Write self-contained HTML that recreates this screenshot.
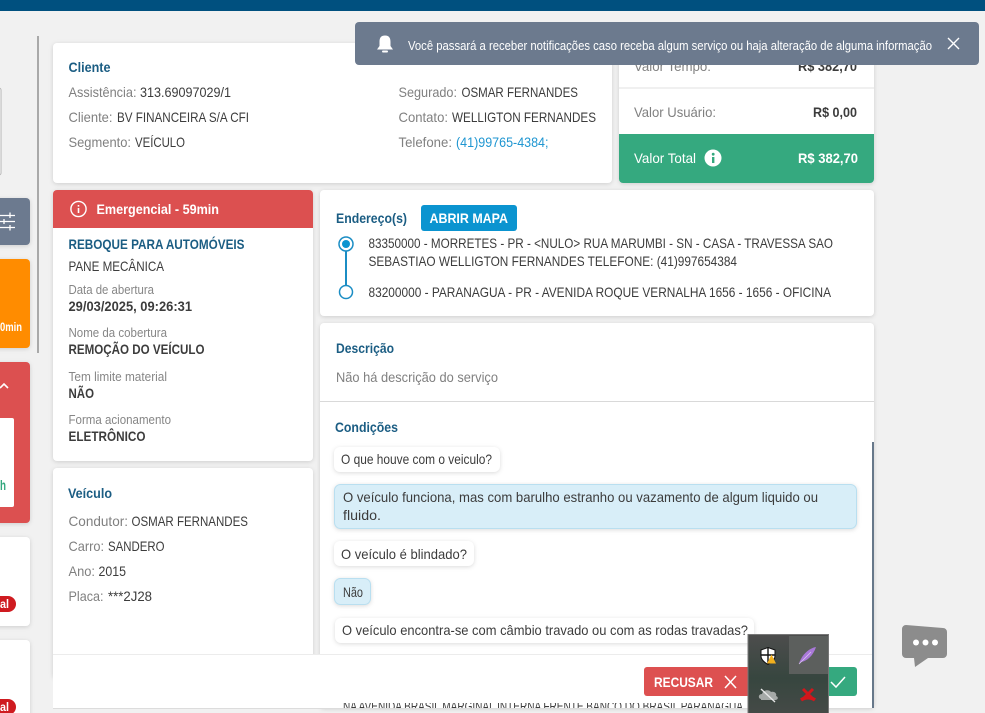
<!DOCTYPE html>
<html lang="pt-BR"><head><meta charset="utf-8"><title>Assistência</title>
<style>
html,body{margin:0;padding:0;width:985px;height:713px;overflow:hidden;background:#f1f1f1}
svg{display:block;position:absolute;left:0;top:0}
text{font-family:"Liberation Sans",sans-serif;font-size:14px;fill:#3c3c3c;white-space:pre}
.l{fill:#808080}.h{fill:#1b5d83;font-weight:bold}.b{font-weight:bold}.w{fill:#fff}.s{font-size:13px;fill:#868686}
.c{filter:drop-shadow(0 1px 2px rgba(0,0,0,.14))}
</style></head><body>
<svg width="985" height="713" viewBox="0 0 985 713" xmlns="http://www.w3.org/2000/svg">
<defs>
<clipPath id="sl"><rect x="330" y="703" width="420" height="5"/></clipPath>
<linearGradient id="tr" x1="0" y1="0" x2="0" y2="1"><stop offset="0" stop-color="#4d4d4d"/><stop offset=".55" stop-color="#37463f"/><stop offset="1" stop-color="#454a47"/></linearGradient>
</defs>
<rect width="985" height="713" fill="#f1f1f1"/>
<rect width="985" height="11" fill="#00507f"/>
<rect x="37" y="36" width="2" height="317" fill="#a9a9a9"/>

<!-- sidebar -->
<rect x="-8" y="88" width="9" height="87" rx="2" fill="#fff" stroke="#b5b5b5"/>
<rect x="-8" y="198" width="38" height="47" rx="4" fill="#6c7a8f" class="c"/>
<g stroke="#fff" stroke-width="1.300" fill="none"><path d="M0 215.500H15M0 221.500H15M0 227.500H15M10 212.500V218M4 219V224M10 225V230.500"/></g>
<rect x="-8" y="259" width="38" height="89" rx="4" fill="#ff8c00" class="c"/>
<text x="0" y="331" class="b w" style="font-size:12px" textLength="22" lengthAdjust="spacingAndGlyphs">0min</text>
<rect x="-8" y="362" width="38" height="161" rx="4" fill="#dc5050" class="c"/>
<path d="M0 388L4 384L8 388" stroke="#fff" stroke-width="1.600" fill="none"/>
<rect x="-8" y="418" width="22" height="89" rx="2" fill="#fff"/>
<text x="0" y="490" class="b" style="fill:#35a97f" textLength="6" lengthAdjust="spacingAndGlyphs">h</text>
<rect x="-8" y="537" width="38" height="89" rx="4" fill="#fff" class="c"/>
<rect x="-10" y="596" width="26" height="16" rx="8" fill="#cf1b20"/>
<text x="0" y="608" class="b w" style="font-size:12px" textLength="9" lengthAdjust="spacingAndGlyphs">al</text>
<rect x="-8" y="640" width="38" height="89" rx="4" fill="#fff" class="c"/>
<rect x="-10" y="699" width="26" height="16" rx="8" fill="#cf1b20"/>
<text x="0" y="711" class="b w" style="font-size:12px" textLength="9" lengthAdjust="spacingAndGlyphs">al</text>

<!-- cliente -->
<rect x="53" y="43" width="559" height="140" rx="4" fill="#fff" class="c"/>
<text x="68.500" y="72" class="h" textLength="42" lengthAdjust="spacingAndGlyphs">Cliente</text>
<text x="68.500" y="97" class="l" textLength="68" lengthAdjust="spacingAndGlyphs">Assistência:</text>
<text x="140" y="97" textLength="91" lengthAdjust="spacingAndGlyphs">313.69097029/1</text>
<text x="68.500" y="122" class="l" textLength="44" lengthAdjust="spacingAndGlyphs">Cliente:</text>
<text x="117" y="122" textLength="132" lengthAdjust="spacingAndGlyphs">BV FINANCEIRA S/A CFI</text>
<text x="68.500" y="147" class="l" textLength="62.500" lengthAdjust="spacingAndGlyphs">Segmento:</text>
<text x="135" y="147" textLength="50" lengthAdjust="spacingAndGlyphs">VEÍCULO</text>
<text x="398.500" y="97" class="l" textLength="58.500" lengthAdjust="spacingAndGlyphs">Segurado:</text>
<text x="461.500" y="97" textLength="116.500" lengthAdjust="spacingAndGlyphs">OSMAR FERNANDES</text>
<text x="398.500" y="122" class="l" textLength="49.500" lengthAdjust="spacingAndGlyphs">Contato:</text>
<text x="452" y="122" textLength="144" lengthAdjust="spacingAndGlyphs">WELLIGTON FERNANDES</text>
<text x="398.500" y="147" class="l" textLength="53.500" lengthAdjust="spacingAndGlyphs">Telefone:</text>
<text x="456" y="147" style="fill:#1f96d1" textLength="92.500" lengthAdjust="spacingAndGlyphs">(41)99765-4384;</text>

<!-- valores -->
<rect x="619" y="30" width="255" height="153" rx="4" fill="#fff" class="c"/>
<rect x="619" y="87" width="255" height="2" fill="#f0f0f0"/>
<text x="634" y="71" class="l" textLength="77" lengthAdjust="spacingAndGlyphs">Valor Tempo:</text>
<text x="798" y="71" class="b" textLength="59" lengthAdjust="spacingAndGlyphs">R$ 382,70</text>
<text x="634" y="117" class="l" textLength="82" lengthAdjust="spacingAndGlyphs">Valor Usuário:</text>
<text x="813" y="117" class="b" textLength="44" lengthAdjust="spacingAndGlyphs">R$ 0,00</text>
<path d="M619 134H874V179a4 4 0 0 1-4 4H623a4 4 0 0 1-4-4Z" fill="#35a97f"/>
<text x="634" y="163" class="w" textLength="62" lengthAdjust="spacingAndGlyphs">Valor Total</text>
<circle cx="713" cy="158" r="8.500" fill="#fff"/>
<rect x="712" y="157" width="2.400" height="6" fill="#35a97f"/><circle cx="713.200" cy="154.200" r="1.400" fill="#35a97f"/>
<text x="798" y="163" class="b w" textLength="60" lengthAdjust="spacingAndGlyphs">R$ 382,70</text>

<!-- emergencial -->
<rect x="53" y="190" width="260" height="271" rx="4" fill="#fff" class="c"/>
<path d="M53 228V194a4 4 0 0 1 4-4H309a4 4 0 0 1 4 4V228Z" fill="#dc5050"/>
<circle cx="78.500" cy="209" r="7.600" fill="none" stroke="#fff" stroke-width="1.400"/>
<rect x="77.700" y="208" width="1.600" height="5" fill="#fff"/><rect x="77.700" y="205" width="1.600" height="1.600" fill="#fff"/>
<text x="96.500" y="214" class="b w" textLength="122.500" lengthAdjust="spacingAndGlyphs">Emergencial - 59min</text>
<text x="68.500" y="249" class="h" textLength="176" lengthAdjust="spacingAndGlyphs">REBOQUE PARA AUTOMÓVEIS</text>
<text x="68.500" y="271" textLength="95.500" lengthAdjust="spacingAndGlyphs">PANE MECÂNICA</text>
<text x="68.500" y="294" class="s" textLength="85.500" lengthAdjust="spacingAndGlyphs">Data de abertura</text>
<text x="68.500" y="311" class="b" textLength="123.500" lengthAdjust="spacingAndGlyphs">29/03/2025, 09:26:31</text>
<text x="68.500" y="337" class="s" textLength="98.500" lengthAdjust="spacingAndGlyphs">Nome da cobertura</text>
<text x="68.500" y="354" class="b" textLength="136" lengthAdjust="spacingAndGlyphs">REMOÇÃO DO VEÍCULO</text>
<text x="68.500" y="381" class="s" textLength="98.500" lengthAdjust="spacingAndGlyphs">Tem limite material</text>
<text x="68.500" y="398" class="b" textLength="25.500" lengthAdjust="spacingAndGlyphs">NÃO</text>
<text x="68.500" y="424" class="s" textLength="102.500" lengthAdjust="spacingAndGlyphs">Forma acionamento</text>
<text x="68.500" y="441" class="b" textLength="77" lengthAdjust="spacingAndGlyphs">ELETRÔNICO</text>

<!-- veiculo -->
<rect x="53" y="468" width="260" height="210" rx="4" fill="#fff" class="c"/>
<text x="68" y="498" class="h" textLength="44" lengthAdjust="spacingAndGlyphs">Veículo</text>
<text x="68.500" y="526" class="l" textLength="59.500" lengthAdjust="spacingAndGlyphs">Condutor:</text>
<text x="131.500" y="526" textLength="116.500" lengthAdjust="spacingAndGlyphs">OSMAR FERNANDES</text>
<text x="68.500" y="551" class="l" textLength="35.500" lengthAdjust="spacingAndGlyphs">Carro:</text>
<text x="108" y="551" textLength="56.500" lengthAdjust="spacingAndGlyphs">SANDERO</text>
<text x="68.500" y="576" class="l" textLength="26.500" lengthAdjust="spacingAndGlyphs">Ano:</text>
<text x="98.500" y="576" textLength="27.500" lengthAdjust="spacingAndGlyphs">2015</text>
<text x="68.500" y="601" class="l" textLength="35" lengthAdjust="spacingAndGlyphs">Placa:</text>
<text x="108" y="601" textLength="44" lengthAdjust="spacingAndGlyphs">***2J28</text>

<!-- endereco -->
<rect x="320" y="190" width="554" height="126" rx="4" fill="#fff" class="c"/>
<text x="336" y="223" class="h" textLength="71" lengthAdjust="spacingAndGlyphs">Endereço(s)</text>
<rect x="421" y="205" width="96" height="26" rx="3" fill="#0b94d0"/>
<text x="429.500" y="223" class="b w" textLength="78.500" lengthAdjust="spacingAndGlyphs">ABRIR MAPA</text>
<rect x="345" y="250" width="2" height="36" fill="#1b8dc4"/>
<circle cx="346" cy="244" r="7" fill="#fff" stroke="#1b8dc4" stroke-width="1.500"/><circle cx="346" cy="244" r="4" fill="#0b94d0"/>
<circle cx="346" cy="292" r="6.500" fill="#fff" stroke="#1b8dc4" stroke-width="1.500"/>
<text x="368.500" y="248" textLength="464.500" lengthAdjust="spacingAndGlyphs">83350000 - MORRETES - PR - &lt;NULO&gt; RUA MARUMBI - SN - CASA - TRAVESSA SAO</text>
<text x="368.500" y="266" textLength="368.500" lengthAdjust="spacingAndGlyphs">SEBASTIAO WELLIGTON FERNANDES TELEFONE: (41)997654384</text>
<text x="368.500" y="297" textLength="462.500" lengthAdjust="spacingAndGlyphs">83200000 - PARANAGUA - PR - AVENIDA ROQUE VERNALHA 1656 - 1656 - OFICINA</text>

<!-- descricao -->
<rect x="320" y="323" width="554" height="385" rx="4" fill="#fff" class="c"/>
<text x="336" y="353" class="h" textLength="58" lengthAdjust="spacingAndGlyphs">Descrição</text>
<text x="336" y="382" class="l" textLength="162" lengthAdjust="spacingAndGlyphs">Não há descrição do serviço</text>
<rect x="320" y="401" width="554" height="1" fill="#d9d9d9"/>
<text x="335" y="432" class="h" textLength="63" lengthAdjust="spacingAndGlyphs">Condições</text>

<rect x="334" y="447" width="166" height="25" rx="6" fill="#fff" class="c"/>
<text x="341" y="464" textLength="151" lengthAdjust="spacingAndGlyphs">O que houve com o veiculo?</text>
<rect x="334.500" y="484.500" width="522" height="44" rx="6" fill="#d8eef8" stroke="#b9dff0" class="c"/>
<text x="343" y="502" textLength="475" lengthAdjust="spacingAndGlyphs">O veículo funciona, mas com barulho estranho ou vazamento de algum liquido ou</text>
<text x="343" y="520" textLength="38" lengthAdjust="spacingAndGlyphs">fluido.</text>
<rect x="334" y="541" width="140" height="25" rx="6" fill="#fff" class="c"/>
<text x="341" y="559" textLength="126" lengthAdjust="spacingAndGlyphs">O veículo é blindado?</text>
<rect x="334.500" y="578.500" width="36" height="26" rx="6" fill="#d8eef8" stroke="#b9dff0" class="c"/>
<text x="343" y="597" textLength="20" lengthAdjust="spacingAndGlyphs">Não</text>
<rect x="335" y="618" width="419" height="25" rx="6" fill="#fff" class="c"/>
<text x="342" y="635" textLength="406" lengthAdjust="spacingAndGlyphs">O veículo encontra-se com câmbio travado ou com as rodas travadas?</text>
<rect x="872" y="442" width="2" height="266" fill="#67788a"/>

<!-- rodape -->
<rect x="53" y="654" width="819" height="54" fill="#fff"/>
<rect x="53" y="654" width="819" height="1" fill="#ececec"/>
<rect x="53" y="708" width="819" height="1" fill="#dcdcdc"/>
<g clip-path="url(#sl)"><text x="343" y="711" textLength="400" lengthAdjust="spacingAndGlyphs">NA AVENIDA BRASIL MARGINAL INTERNA FRENTE BANCO DO BRASIL PARANAGUA</text></g>
<rect x="644" y="667" width="110" height="29" rx="3" fill="#dd5050"/>
<text x="654" y="687" class="b w" textLength="59" lengthAdjust="spacingAndGlyphs">RECUSAR</text>
<path d="M725 676L736 688M736 676L725 688" stroke="#fff" stroke-width="1.500" fill="none"/>
<rect x="810" y="667" width="47" height="29" rx="3" fill="#35a97f"/>
<path d="M831 682L836 687L845 677" stroke="#fff" stroke-width="1.500" fill="none"/>

<!-- notificacao -->
<rect x="355" y="22" width="624" height="43" rx="4" fill="#6c7a8e"/>
<path d="M385 35.500c-4.500 0-5.500 3-5.500 6.500v4l-2.500 3.500h16L390.500 46v-4c0-3.500-1-6.500-5.500-6.500Z" fill="#fff"/>
<rect x="382" y="50.500" width="6" height="2" rx="1" fill="#fff"/>
<text x="408" y="50" class="w" style="font-size:13px" textLength="524" lengthAdjust="spacingAndGlyphs">Você passará a receber notificações caso receba algum serviço ou haja alteração de alguma informação</text>
<path d="M948 38L959 49M959 38L948 49" stroke="#fff" stroke-width="1.400" fill="none"/>

<!-- chat -->
<path d="M906 625L943 628a4 4 0 0 1 4 4V654a4 4 0 0 1-4 4H928L915 667L914 658H906a4 4 0 0 1-4-4V629a4 4 0 0 1 4-4Z" fill="#8c8c8c"/>
<circle cx="916" cy="642.500" r="3" fill="#fff"/><circle cx="925.500" cy="642.500" r="3" fill="#fff"/><circle cx="935" cy="642.500" r="3" fill="#fff"/>

<!-- bandeja -->
<rect x="748" y="634.500" width="80.500" height="80" fill="url(#tr)" stroke="#777"/>
<rect x="789" y="636" width="39" height="38" fill="#5c5f5d"/>
<path d="M768 647.500l7 2.500v6c0 4-3.500 6.500-7 8.500c-3.500-2-7-4.500-7-8.500v-6Z" fill="#fff" stroke="#111" stroke-width="1"/>
<path d="M768 648V664M761 655H775" stroke="#111" stroke-width="1.400"/>
<path d="M767 663.500l4.500-9l4.500 9Z" fill="#f2b01e"/>
<path d="M816 647c-6 1-12 6-15 12l-2 4 2-1c6-1 12-6 15-15Z" fill="#a978d8"/>
<path d="M799 664l12-12" stroke="#dcc8f0" stroke-width=".8"/>
<path d="M761 699c-3 0-3-5 1-5c1-4 7-5 9-2c4-1 6 2 5 4c3 1 2 4-1 4H761Z" fill="#a5a9a7"/>
<path d="M761 689L775 702" stroke="#e8e8e8" stroke-width="1.400"/>
<path d="M803 689L813 699M813 689L803 699" stroke="#d3161b" stroke-width="3"/>
<path d="M801 700c4-3 10-3 14 0" stroke="#d3161b" stroke-width="3.500" fill="none"/>
</svg>
</body></html>
